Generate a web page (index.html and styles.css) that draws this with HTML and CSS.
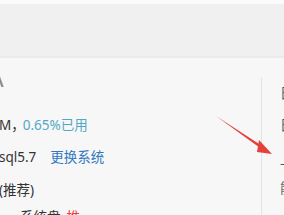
FILE: index.html
```html
<!DOCTYPE html>
<html>
<head>
<meta charset="utf-8">
<link rel="stylesheet" href="styles.css">
</head>
<body>
<div class="page">
  <div class="topgap"></div>
  <div class="header"></div>
  <div class="main">
    <div class="left">
      <div class="mark">\</div>
      <div class="row r1"><span class="dark">M<span class="comma">，</span></span><span class="teal">0.65%已用</span></div>
      <div class="row r2"><span class="dark">sql5.7</span><span class="link">更换系统</span></div>
      <div class="row r3"><span class="dark">(推荐)</span></div>
      <div class="row r4"><span class="dark">系统盘</span><span class="red">推</span></div>
      <svg class="arrow" width="70" height="45" viewBox="0 0 70 45">
        <path d="M1 1 L48 31.5 L46.5 34 Z" fill="#e5413a"/>
        <polygon points="44,25 57,39 42,37" fill="#e5413a"/>
      </svg>
    </div>
    <div class="right">
      <div class="rtxt t1">日</div>
      <div class="rtxt t2">日</div>
      <div class="rtxt t3">一</div>
      <div class="rtxt t4">能</div>
    </div>
  </div>
</div>
</body>
</html>
```
FILE: styles.css
```css
html, body {
  margin: 0;
  padding: 0;
}
body {
  width: 284px;
  height: 215px;
  overflow: hidden;
  font-family: "Noto Sans", "Noto Sans CJK SC", sans-serif;
  background: #f7f7f7;
}
.page {
  width: 284px;
  height: 215px;
  overflow: hidden;
  display: flex;
  flex-direction: column;
}
.topgap {
  height: 4px;
  flex: none;
  background: #fbfbfb;
}
.header {
  height: 52px;
  flex: none;
  background: #f0f0f0;
  border-bottom: 2px solid #ebebeb;
}
.main {
  flex: 1;
  min-height: 0;
  display: flex;
  background: #f7f7f7;
}
.left {
  width: 261px;
  position: relative;
  flex: none;
}
.mark {
  margin-top: 13px;
  margin-left: -3px;
  height: 20px;
  font-size: 16px;
  font-weight: bold;
  line-height: 20px;
  color: #888;
}
.row {
  font-size: 13.5px;
  line-height: 20px;
  height: 20px;
  white-space: nowrap;
  margin-left: -1px;
}
.r1 { margin-top: 24px; }
.r2 { margin-top: 12px; }
.r3 { margin-top: 13px; }
.r4 { margin-top: 7px; margin-left: 20px; color: #444; }
.dark { color: #333; }
.comma { letter-spacing: -2px; }
.teal { color: #52a9c5; }
.link { color: #2f79c0; margin-left: 14px; }
.red { color: #e5413a; margin-left: 6px; }
.arrow {
  position: absolute;
  left: 215px;
  top: 57px;
}
.right {
  flex: 1;
  margin-top: 19px;
  border-left: 1px solid #e4e4e4;
  padding-left: 18px;
  overflow: hidden;
}
.rtxt {
  font-size: 13.5px;
  line-height: 20px;
  height: 20px;
  color: #555;
  white-space: nowrap;
}
.t1 { margin-top: 6px; }
.t2 { margin-top: 12px; }
.t3 { margin-top: 20px; }
.t4 { margin-top: 3px; color: #666; }
```
